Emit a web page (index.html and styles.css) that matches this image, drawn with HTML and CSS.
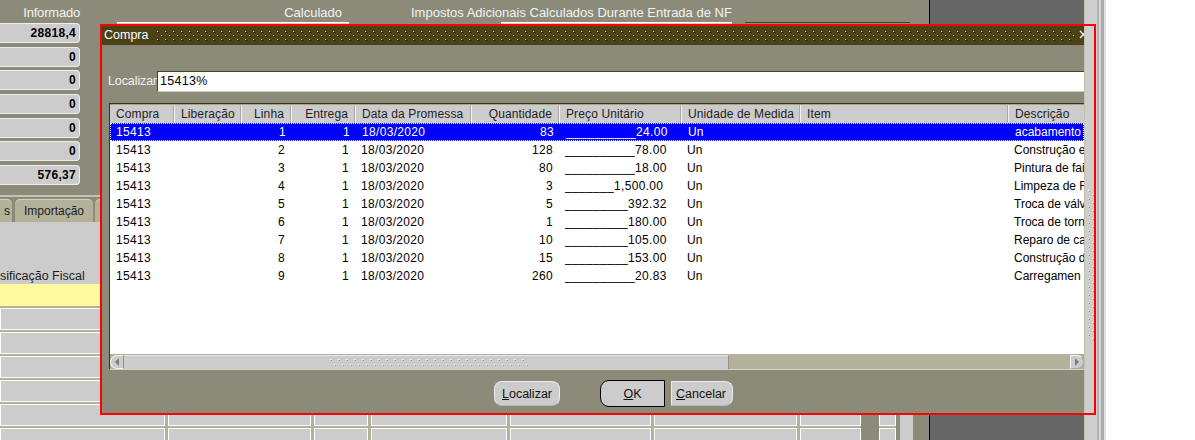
FILE: index.html
```html
<!DOCTYPE html>
<html lang="pt">
<head>
<meta charset="utf-8">
<title>Compra</title>
<link rel="stylesheet" href="styles.css">
</head>
<body>
<div class="screen">
  <div class="form">
    <div class="labels">
      <span class="lbl-inf">Informado</span>
      <span class="lbl-calc">Calculado</span>
      <span class="lbl-imp">Impostos Adicionais Calculados Durante Entrada de NF</span>
    </div>
    <div class="upper">
      <div class="fieldcol">
        <div class="num">28818,4</div>
        <div class="num">0</div>
        <div class="num">0</div>
        <div class="num">0</div>
        <div class="num">0</div>
        <div class="num">0</div>
        <div class="num">576,37</div>
      </div>
      <div class="tfield tf-calc"></div>
      <div class="tfield tf-imp"></div>
      <div class="tfield tf-dark"></div>
    </div>
    <div class="tabs">
      <div class="tab tab-cut">s</div>
      <div class="tab tab-imp">Importação</div>
      <div class="tab tab-next"></div>
    </div>
    <div class="panel">
      <div class="colhdr">sificação Fiscal</div>
      <div class="rowsarea">
        <div class="rgrid">
          <div class="brow cur"><i></i><i></i><i></i><i></i><i></i><i></i><i></i></div>
          <div class="brow"><i></i><i></i><i></i><i></i><i></i><i></i><i></i></div>
          <div class="brow"><i></i><i></i><i></i><i></i><i></i><i></i><i></i></div>
          <div class="brow"><i></i><i></i><i></i><i></i><i></i><i></i><i></i></div>
          <div class="brow"><i></i><i></i><i></i><i></i><i></i><i></i><i></i></div>
          <div class="brow"><i></i><i></i><i></i><i></i><i></i><i></i><i></i></div>
          <div class="brow"><i></i><i></i><i></i><i></i><i></i><i></i><i></i></div>
        </div>
        <div class="chk">
          <i></i><i></i><i></i><i></i><i></i><i></i><i></i>
        </div>
        <div class="rscroll"></div>
      </div>
    </div>
  </div>
  <div class="darkpane"></div>
  <div class="vscroll">
    <svg class="vgrip" width="8" height="150" aria-hidden="true">
      <defs>
        <pattern id="vg" width="8" height="8" patternUnits="userSpaceOnUse">
          <rect x="0" y="0" width="1" height="1" fill="#ffffff"/>
          <rect x="1" y="1" width="1" height="1" fill="#9a9a9a"/>
          <rect x="4" y="4" width="1" height="1" fill="#ffffff"/>
          <rect x="5" y="5" width="1" height="1" fill="#9a9a9a"/>
        </pattern>
      </defs>
      <rect width="8" height="150" fill="url(#vg)"/>
    </svg>
  </div>
  <div class="blank"></div>

  <div class="dialog">
    <div class="titlebar">
      <span class="title">Compra</span>
      <svg class="tgrip" width="919" height="10" aria-hidden="true">
        <defs>
          <pattern id="tg" width="8" height="8" patternUnits="userSpaceOnUse">
            <rect x="0" y="0" width="1" height="1" fill="#d8cfa8"/>
            <rect x="1" y="1" width="1" height="1" fill="#161202"/>
            <rect x="4" y="4" width="1" height="1" fill="#d8cfa8"/>
            <rect x="5" y="5" width="1" height="1" fill="#161202"/>
          </pattern>
        </defs>
        <rect width="919" height="10" fill="url(#tg)"/>
      </svg>
      <svg class="tclose" width="12" height="19" aria-hidden="true">
        <path d="M2 5 L9 12 M9 5 L2 12" stroke="#ffffff" stroke-width="1.4" fill="none"/>
      </svg>
    </div>

    <div class="findrow">
      <span class="findlbl">Localizar</span>
      <div class="findinput">15413%</div>
    </div>

    <div class="gridbox">
      <div class="grow ghead">
        <span>Compra</span>
        <span>Liberação</span>
        <span class="r">Linha</span>
        <span class="r">Entrega</span>
        <span>Data da Promessa</span>
        <span class="r">Quantidade</span>
        <span>Preço Unitário</span>
        <span>Unidade de Medida</span>
        <span>Item</span>
        <span>Descrição</span>
      </div>
      <div class="gbody">
        <div class="grow sel"><span class="n">15413</span><span></span><span class="r n">1</span><span class="r n">1</span><span class="n">18/03/2020</span><span class="r n">83</span><span class="n">__________24.00</span><span>Un</span><span></span><span>acabamento</span></div>
        <div class="grow"><span class="n">15413</span><span></span><span class="r n">2</span><span class="r n">1</span><span class="n">18/03/2020</span><span class="r n">128</span><span class="n">__________78.00</span><span>Un</span><span></span><span>Construção e</span></div>
        <div class="grow"><span class="n">15413</span><span></span><span class="r n">3</span><span class="r n">1</span><span class="n">18/03/2020</span><span class="r n">80</span><span class="n">__________18.00</span><span>Un</span><span></span><span>Pintura de fai</span></div>
        <div class="grow"><span class="n">15413</span><span></span><span class="r n">4</span><span class="r n">1</span><span class="n">18/03/2020</span><span class="r n">3</span><span class="n">_______1,500.00</span><span>Un</span><span></span><span>Limpeza de F</span></div>
        <div class="grow"><span class="n">15413</span><span></span><span class="r n">5</span><span class="r n">1</span><span class="n">18/03/2020</span><span class="r n">5</span><span class="n">_________392.32</span><span>Un</span><span></span><span>Troca de válv</span></div>
        <div class="grow"><span class="n">15413</span><span></span><span class="r n">6</span><span class="r n">1</span><span class="n">18/03/2020</span><span class="r n">1</span><span class="n">_________180.00</span><span>Un</span><span></span><span>Troca de torn</span></div>
        <div class="grow"><span class="n">15413</span><span></span><span class="r n">7</span><span class="r n">1</span><span class="n">18/03/2020</span><span class="r n">10</span><span class="n">_________105.00</span><span>Un</span><span></span><span>Reparo de ca</span></div>
        <div class="grow"><span class="n">15413</span><span></span><span class="r n">8</span><span class="r n">1</span><span class="n">18/03/2020</span><span class="r n">15</span><span class="n">_________153.00</span><span>Un</span><span></span><span>Construção d</span></div>
        <div class="grow"><span class="n">15413</span><span></span><span class="r n">9</span><span class="r n">1</span><span class="n">18/03/2020</span><span class="r n">260</span><span class="n">__________20.83</span><span>Un</span><span></span><span>Carregamen</span></div>
      </div>
      <div class="hscroll">
        <div class="sb-btn sb-left"><span class="tri-l"></span></div>
        <div class="thumb">
          <svg class="hgrip" width="200" height="8" aria-hidden="true">
            <defs>
              <pattern id="hg" width="8" height="10" patternUnits="userSpaceOnUse">
                <rect x="0" y="0" width="1" height="1" fill="#ffffff"/>
                <rect x="1" y="1" width="1" height="1" fill="#9a9a9a"/>
                <rect x="4" y="5" width="1" height="1" fill="#ffffff"/>
                <rect x="5" y="6" width="1" height="1" fill="#9a9a9a"/>
              </pattern>
            </defs>
            <rect width="200" height="8" fill="url(#hg)"/>
          </svg>
        </div>
        <div class="track"></div>
        <div class="sb-btn sb-right"><span class="tri-r"></span></div>
      </div>
    </div>

    <div class="btnrow">
      <div class="btn b-loc"><span class="u">L</span>ocalizar</div>
      <div class="btn b-ok"><span class="u">O</span>K</div>
      <div class="btn b-can"><span class="u">C</span>ancelar</div>
    </div>
  </div>

  <div class="redbox"></div>
</div>
</body>
</html>
```

FILE: styles.css
```css
* { box-sizing: border-box; }
html, body { margin: 0; padding: 0; }
body {
  width: 1195px;
  height: 440px;
  overflow: hidden;
  background: #ffffff;
  font-family: "Liberation Sans", Arial, sans-serif;
  font-size: 12px;
  color: #000;
}
.screen {
  position: relative;
  display: flex;
  width: 1195px;
  height: 440px;
  overflow: hidden;
}

/* ---------- underlying form ---------- */
.form {
  width: 929px;
  height: 440px;
  flex: none;
  background: #8c8b7a;
  display: flex;
  flex-direction: column;
  overflow: hidden;
}
.labels {
  height: 22px;
  flex: none;
  display: flex;
  align-items: center;
  padding-top: 2px;
  color: #f2f2f2;
  white-space: nowrap;
  font-size: 13px;
}
.lbl-inf { width: 80px; text-align: right; letter-spacing: -0.2px; }
.lbl-calc { width: 262px; text-align: right; }
.lbl-imp { margin-left: 69px; }

.upper {
  height: 164px;
  display: flex;
  align-items: flex-start;
  flex: none;
}
.fieldcol {
  width: 80px;
  flex: none;
  margin-top: 1px;
  display: flex;
  flex-direction: column;
  gap: 3.67px;
}
.num {
  height: 20px;
  flex: none;
  background: #cccccc;
  border: 1px solid #ededed;
  border-left: none;
  border-radius: 0 4px 4px 0;
  font-weight: bold;
  text-align: right;
  padding-right: 3px;
  line-height: 18px;
  letter-spacing: 0.3px;
}
.tfield {
  height: 20px;
  background: #cccccc;
  border-top: 1px solid #ffffff;
  flex: none;
}
.tf-calc { margin-left: 37px; width: 232px; }
.tf-imp { margin-left: 152px; width: 231px; }
.tf-dark { margin-left: 13px; width: 165px; border-top-color: #4b4215; background: #8c8b7a; }

.tabs {
  height: 27px;
  margin-top: 9px;
  flex: none;
  display: flex;
  align-items: flex-end;
  border-top: 2px solid #c4c2b0;
}
.tab {
  height: 23px;
  background: #b4b19a;
  border-radius: 5px 5px 0 0;
  border-top: 1px solid #d2d0c0;
  color: #1e1e1e;
  line-height: 23px;
  white-space: nowrap;
}
.tab-cut { width: 12px; text-align: right; padding-right: 2px; border-radius: 0 5px 0 0; }
.tab-imp { width: 78px; margin-left: 3px; text-align: center; }
.tab-next { width: 60px; margin-left: 2px; }

.panel {
  flex: 1;
  min-height: 0;
  background: #cccccc;
  display: flex;
  flex-direction: column;
}
.colhdr {
  height: 62px;
  flex: none;
  display: flex;
  align-items: flex-end;
  padding-bottom: 1px;
  color: #1e1e1e;
  white-space: nowrap;
  font-size: 12.5px;
}
.rowsarea {
  flex: none;
  height: 200px;
  display: flex;
  align-items: stretch;
  background: #8c8b7a;
}
.rgrid {
  width: 861px;
  flex: none;
  display: flex;
  flex-direction: column;
  gap: 2px;
  background: #b4b19a;
}
.brow { display: flex; gap: 3px; height: 22px; flex: none; }
.brow i, .chk i {
  display: block;
  height: 22px;
  flex: none;
  background: #cccccc;
  border: 1px solid #ffffff;
}
.brow i:nth-child(1) { width: 165px; }
.brow i:nth-child(2) { width: 143px; }
.brow i:nth-child(3) { width: 54px; }
.brow i:nth-child(4) { width: 136px; }
.brow i:nth-child(5) { width: 141px; }
.brow i:nth-child(6) { width: 143px; }
.brow i:nth-child(7) { width: 61px; }
.brow.cur i { background: #fffa9f; border-color: #fffa9f; }
.chk {
  width: 17px;
  flex: none;
  margin-left: 18px;
  display: flex;
  flex-direction: column;
  gap: 2px;
  background: #b4b19a;
}
.rscroll { width: 13px; flex: none; margin-left: 4px; background: #cccccc; }

.darkpane {
  width: 155px;
  flex: none;
  background: #666666;
  border-left: 1px solid #000000;
}
.vscroll {
  width: 22px;
  flex: none;
  position: relative;
  z-index: 5;
  padding-top: 190px;
  padding-left: 4px;
  background: linear-gradient(to right,
    #c2c0ae 0, #c2c0ae 1px,
    #cecece 1px, #cecece 13px,
    #b4b4b4 13px, #b4b4b4 15px,
    #d4d4d4 15px, #d4d4d4 17px,
    #a9a9a9 17px, #a9a9a9 20px,
    #e2e2e2 20px, #e2e2e2 22px);
}
.vgrip { display: block; }
.blank { flex: 1; background: #ffffff; }

/* ---------- dialog ---------- */
.dialog {
  position: absolute;
  left: 100px;
  top: 24px;
  width: 990px;
  height: 390px;
  z-index: 2;
  background: #8c8b7a;
  padding: 2px 0 0 2px;
  display: flex;
  flex-direction: column;
  overflow: hidden;
}
.titlebar {
  height: 19px;
  flex: none;
  background: #4b4215;
  display: flex;
  align-items: flex-start;
  color: #ffffff;
  font-size: 12.5px;
}
.title { width: 55px; padding-left: 2px; line-height: 19px; flex: none; }
.tgrip { margin-top: 5px; flex: none; display: block; }
.tclose { margin-left: 2px; flex: none; display: block; }

.findrow {
  margin-top: 26px;
  height: 21px;
  flex: none;
  display: flex;
  font-size: 12.5px;
}
.findlbl {
  width: 55px;
  flex: none;
  padding-left: 6px;
  line-height: 21px;
  color: #f2f2f2;
  letter-spacing: -0.1px;
}
.findinput {
  flex: 1;
  background: #ffffff;
  border-top: 1px solid #4b4215;
  border-left: 1px solid #4b4215;
  border-bottom: 1px solid #d0cdb8;
  padding-left: 2px;
  line-height: 19px;
  color: #000;
  letter-spacing: 0.3px;
}

.gridbox {
  margin: 11px 0 0 7px;
  width: 975px;
  height: 267px;
  flex: none;
  border-top: 1px solid #3e3610;
  border-left: 1px solid #3e3610;
  border-bottom-left-radius: 2px;
  display: flex;
  flex-direction: column;
  background: #ffffff;
}
.grow {
  display: grid;
  grid-template-columns: 64px 67px 50px 64px 116px 88px 122px 119px 208px 200px;
  height: 18px;
  line-height: 18px;
  flex: none;
  white-space: nowrap;
}
.grow span { padding: 0 6px; overflow: hidden; }
.grow span.r { text-align: right; }
.grow span.n { letter-spacing: 0.33px; }
.ghead {
  height: 19px;
  border-top: 1px solid #a3a190;
  background: #cccccc;
  color: #1e1e1e;
  letter-spacing: 0.12px;
}
.ghead span {
  border-left: 1px solid #f2f2f2;
  border-right: 1px solid #a8a8a8;
}
.ghead span:first-child { border-left: none; }
.gbody {
  flex: 1;
  background: #ffffff;
  overflow: hidden;
}
.grow.sel {
  background: #0000ff;
  color: #ffffff;
  border: 1px dotted #ffffff;
  line-height: 16px;
}
.grow.sel span:first-child { padding-left: 5px; }

.hscroll {
  height: 16px;
  flex: none;
  display: flex;
  background: #b4b19a;
  border-top: 1px solid #b4b19a;
  border-bottom: 1px solid #d4d2c2;
}
.sb-btn {
  width: 14px;
  flex: none;
  background: #cccccc;
  display: flex;
  align-items: center;
  justify-content: center;
  border: 1px solid #f4f4f4;
}
.sb-left { border-radius: 7px 0 0 7px; border-right-color: #8f8f8f; }
.sb-right { border-radius: 0 7px 7px 0; border-right-color: #a8a8a8; border-bottom-color: #a8a8a8; }
.tri-l {
  width: 0; height: 0;
  border-top: 4px solid transparent;
  border-bottom: 4px solid transparent;
  border-right: 4px solid #7c7c7c;
}
.tri-r {
  width: 0; height: 0;
  border-top: 4px solid transparent;
  border-bottom: 4px solid transparent;
  border-left: 4px solid #7c7c7c;
}
.thumb {
  width: 605px;
  flex: none;
  background: #cccccc;
  border-top: 1px solid #e6e6e6;
  border-right: 1px solid #8f8f8f;
  display: flex;
  align-items: center;
  padding-left: 206px;
}
.hgrip { display: block; }
.track { flex: 1; background: #b4b19a; }

.btnrow {
  margin-top: 10px;
  height: 27px;
  flex: none;
  display: flex;
  align-items: center;
  padding-left: 392px;
  font-size: 12.5px;
}
.btn {
  height: 25px;
  flex: none;
  background: #cccccc;
  border: 1px solid #ececec;
  border-bottom-color: #b8b8b0;
  color: #111111;
  display: flex;
  align-items: center;
  justify-content: center;
  white-space: nowrap;
}
.b-loc { width: 66px; border-radius: 8px; }
.b-ok {
  width: 65px;
  height: 27px;
  margin-left: 40px;
  border: 1px solid #000000;
  border-radius: 9px 0 0 9px;
}
.b-can {
  width: 62px;
  margin-left: 6px;
  border-radius: 0 8px 8px 0;
  justify-content: flex-start;
  padding-left: 4px;
}
.u { text-decoration: underline; }

.redbox {
  position: absolute;
  left: 100px;
  top: 24px;
  width: 996px;
  height: 391px;
  border: 2px solid #ff0000;
  z-index: 10;
  pointer-events: none;
}
```
